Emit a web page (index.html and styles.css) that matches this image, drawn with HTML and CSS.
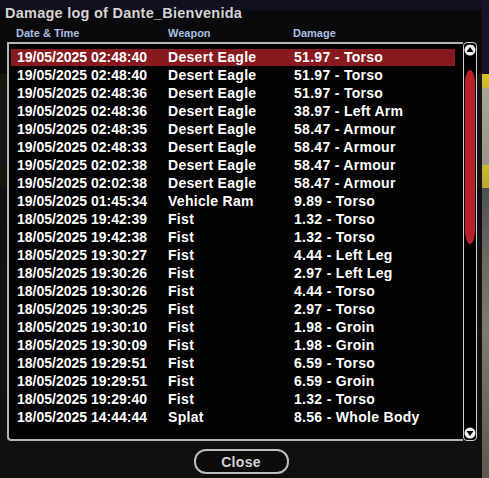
FILE: index.html
```html
<!DOCTYPE html>
<html lang="en">
<head>
    <meta charset="UTF-8">
    <title>Damage log</title>
    <link rel="stylesheet" href="styles.css">
</head>
<body>
    <div class="dialog">
        <div class="title">Damage log of Dante_Bienvenida</div>

        <div class="columns">
            <span>Date &amp; Time</span>
            <span>Weapon</span>
            <span>Damage</span>
        </div>

        <div class="list-wrap">
            <div class="list">
                <div class="row selected"><span>19/05/2025 02:48:40</span><span>Desert Eagle</span><span>51.97 - Torso</span></div>
                <div class="row"><span>19/05/2025 02:48:40</span><span>Desert Eagle</span><span>51.97 - Torso</span></div>
                <div class="row"><span>19/05/2025 02:48:36</span><span>Desert Eagle</span><span>51.97 - Torso</span></div>
                <div class="row"><span>19/05/2025 02:48:36</span><span>Desert Eagle</span><span>38.97 - Left Arm</span></div>
                <div class="row"><span>19/05/2025 02:48:35</span><span>Desert Eagle</span><span>58.47 - Armour</span></div>
                <div class="row"><span>19/05/2025 02:48:33</span><span>Desert Eagle</span><span>58.47 - Armour</span></div>
                <div class="row"><span>19/05/2025 02:02:38</span><span>Desert Eagle</span><span>58.47 - Armour</span></div>
                <div class="row"><span>19/05/2025 02:02:38</span><span>Desert Eagle</span><span>58.47 - Armour</span></div>
                <div class="row"><span>19/05/2025 01:45:34</span><span>Vehicle Ram</span><span>9.89 - Torso</span></div>
                <div class="row"><span>18/05/2025 19:42:39</span><span>Fist</span><span>1.32 - Torso</span></div>
                <div class="row"><span>18/05/2025 19:42:38</span><span>Fist</span><span>1.32 - Torso</span></div>
                <div class="row"><span>18/05/2025 19:30:27</span><span>Fist</span><span>4.44 - Left Leg</span></div>
                <div class="row"><span>18/05/2025 19:30:26</span><span>Fist</span><span>2.97 - Left Leg</span></div>
                <div class="row"><span>18/05/2025 19:30:26</span><span>Fist</span><span>4.44 - Torso</span></div>
                <div class="row"><span>18/05/2025 19:30:25</span><span>Fist</span><span>2.97 - Torso</span></div>
                <div class="row"><span>18/05/2025 19:30:10</span><span>Fist</span><span>1.98 - Groin</span></div>
                <div class="row"><span>18/05/2025 19:30:09</span><span>Fist</span><span>1.98 - Groin</span></div>
                <div class="row"><span>18/05/2025 19:29:51</span><span>Fist</span><span>6.59 - Torso</span></div>
                <div class="row"><span>18/05/2025 19:29:51</span><span>Fist</span><span>6.59 - Groin</span></div>
                <div class="row"><span>18/05/2025 19:29:40</span><span>Fist</span><span>1.32 - Torso</span></div>
                <div class="row"><span>18/05/2025 14:44:44</span><span>Splat</span><span>8.56 - Whole Body</span></div>
            </div>
            <div class="scrollbar">
                <svg class="arrow" width="12" height="12" viewBox="0 0 12 12">
                    <circle cx="6" cy="6" r="5.5" fill="#f0f0f0"/>
                    <path d="M2.5 8 L6 3 L9.5 8 Z" fill="#000"/>
                </svg>
                <div class="track">
                    <div class="thumb"></div>
                </div>
                <svg class="arrow" width="12" height="12" viewBox="0 0 12 12">
                    <circle cx="6" cy="6" r="5.5" fill="#f0f0f0"/>
                    <path d="M2.5 4 L6 9 L9.5 4 Z" fill="#000"/>
                </svg>
            </div>
        </div>

        <div class="buttons">
            <button class="close-button">Close</button>
        </div>
    </div>
</body>
</html>
```

FILE: styles.css
```css
body {
    margin: 0;
    width: 489px;
    height: 478px;
    overflow: hidden;
    font-family: "Liberation Sans", Arial, sans-serif;
    background: linear-gradient(to bottom,
        #17132a 0, #17132a 74px,
        #d6c21e 74px, #cdb92a 88px,
        #a9a393 88px, #9c968a 165px,
        #c9b92a 165px, #b8a830 188px,
        #4d5250 188px, #6a6a60 260px,
        #807a6e 330px, #5a5850 478px);
}
.dialog {
    width: 482px;
    height: 478px;
    background: rgba(10, 10, 10, 0.93);
    box-sizing: border-box;
    display: flex;
    flex-direction: column;
}
.title {
    height: 26px;
    padding-left: 5px;
    line-height: 27px;
    font-size: 14.5px;
    font-weight: bold;
    letter-spacing: 0.25px;
    color: #d4d4d4;
    background: linear-gradient(to bottom, rgba(20, 16, 36, 0.8) 0, rgba(20, 16, 36, 0.8) 10px, transparent 10px);
}
.columns {
    display: grid;
    grid-template-columns: 152px 125px 1fr;
    padding-left: 16px;
    height: 16px;
    line-height: 14px;
    font-size: 11px;
    font-weight: bold;
    color: #a7c0e4;
}
.list-wrap {
    display: flex;
    margin-left: 7px;
    margin-right: 5px;
    height: 399px;
}
.list {
    flex: 1;
    background: #030303;
    border: 2px solid #b4b4b4;
    border-right: none;
    border-bottom-left-radius: 4px;
    padding: 5px 8px 0 2px;
}
.row {
    display: grid;
    grid-template-columns: 151px 126px 1fr;
    height: 18px;
    line-height: 16px;
    padding-left: 6px;
    font-size: 14px;
    font-weight: bold;
    letter-spacing: 0.3px;
    color: #ffffff;
    white-space: nowrap;
}
.row span:first-child {
    letter-spacing: 0;
}
.row.selected {
    height: 17px;
    margin-bottom: 1px;
    background-color: #881a1f;
}
.scrollbar {
    width: 12px;
    border: 1.5px solid #d0d0d0;
    border-radius: 4px;
    background: #000;
    display: flex;
    flex-direction: column;
    align-items: center;
    padding: 1px 0;
}
.arrow {
    flex: none;
}
.track {
    flex: 1;
    width: 100%;
    padding-top: 14px;
}
.thumb {
    width: 10px;
    height: 174px;
    margin: 0 auto;
    background: #b9222b;
    border-radius: 50% / 8%;
}
.buttons {
    display: flex;
    justify-content: center;
    padding-top: 8px;
}
.close-button {
    width: 95px;
    height: 25px;
    border: 2px solid #bdbdbd;
    border-radius: 12px;
    background: #0c0c0c;
    color: #d4d4d4;
    font-family: "Liberation Sans", Arial, sans-serif;
    font-size: 14px;
    font-weight: bold;
    letter-spacing: 0.3px;
    padding: 0;
}
```
